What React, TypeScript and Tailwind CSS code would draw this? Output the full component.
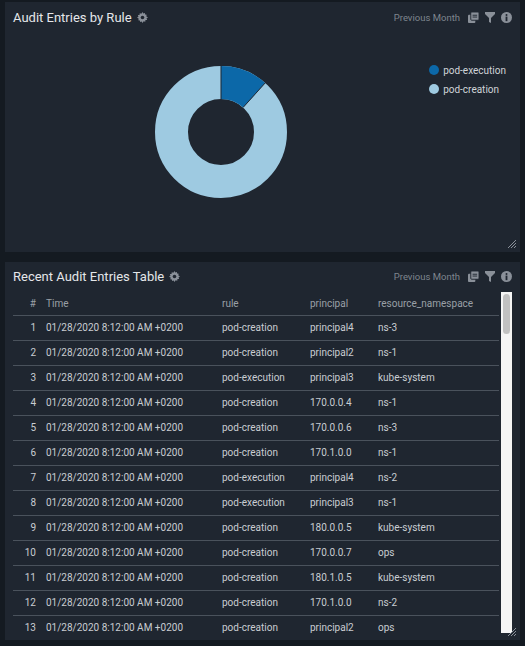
import React from "react";

const rows = [
  ["pod-creation","principal4","ns-3"],
  ["pod-creation","principal2","ns-1"],
  ["pod-execution","principal3","kube-system"],
  ["pod-creation","170.0.0.4","ns-1"],
  ["pod-creation","170.0.0.6","ns-3"],
  ["pod-creation","170.1.0.0","ns-1"],
  ["pod-execution","principal4","ns-2"],
  ["pod-execution","principal3","ns-1"],
  ["pod-creation","180.0.0.5","kube-system"],
  ["pod-creation","170.0.0.7","ops"],
  ["pod-creation","180.1.0.5","kube-system"],
  ["pod-creation","170.1.0.0","ns-2"],
  ["pod-creation","principal2","ops"],
];

function Gear() {
  return (
    <svg width="11" height="11" viewBox="0 0 16 16" fill="#8a9099">
      <path d="M8 0l1.2 2.1 2.3-.8.3 2.4 2.4.3-.8 2.3L16 8l-2.1 1.2.8 2.3-2.4.3-.3 2.4-2.3-.8L8 16l-1.2-2.1-2.3.8-.3-2.4-2.4-.3.8-2.3L0 8l2.1-1.2-.8-2.3 2.4-.3.3-2.4 2.3.8z" />
      <circle cx="8" cy="8" r="2.6" fill="#1f2630" />
    </svg>
  );
}

function Tools() {
  return (
    <div className="flex items-center gap-[6px] text-[#7e858e]">
      <span className="text-[9.5px] mr-[2px]">Previous Month</span>
      <svg width="11" height="11" viewBox="0 0 12 12" fill="#8a9099">
        <rect x="0" y="3" width="8" height="9" rx="1" />
        <rect x="3" y="0" width="9" height="9" rx="1" stroke="#1f2630" strokeWidth="1" />
        <rect x="5" y="3" width="5" height="1" fill="#1f2630" />
        <rect x="5" y="5" width="5" height="1" fill="#1f2630" />
      </svg>
      <svg width="10" height="11" viewBox="0 0 10 11" fill="#8a9099">
        <path d="M0 0h10v2L6 6v5L4 10V6L0 2z" />
      </svg>
      <svg width="11" height="11" viewBox="0 0 12 12">
        <circle cx="6" cy="6" r="6" fill="#8a9099" />
        <rect x="5" y="5" width="2" height="5" fill="#1f2630" />
        <circle cx="6" cy="3.2" r="1.1" fill="#1f2630" />
      </svg>
    </div>
  );
}

function Resize() {
  return (
    <svg width="9" height="9" viewBox="0 0 9 9" className="absolute right-[3px] bottom-[3px]" stroke="#8a9099" strokeWidth="1">
      <path d="M8 0L0 8M8 3L3 8M8 6L6 8" />
    </svg>
  );
}

export default function App() {
  const a = (42 * Math.PI) / 180;
  const R = 66, r = 33, cx = 67, cy = 67;
  const x1 = cx + R * Math.sin(a), y1 = cy - R * Math.cos(a);
  const x2 = cx + r * Math.sin(a), y2 = cy - r * Math.cos(a);
  return (
    <div className="w-[525px] h-[646px] bg-[#141a21] px-[5px] pt-[2px] flex flex-col gap-[10px]" style={{ fontFamily: "Roboto, 'Liberation Sans', sans-serif" }}>
      <div className="relative h-[250px] bg-[#1f2630] px-[8px] pt-[6px] shrink-0">
        <div className="flex items-center justify-between">
          <div className="flex items-center gap-[5px] text-[#e5e7ea] text-[13px]">Audit Entries by Rule <Gear /></div>
          <Tools />
        </div>
        <div className="flex">
          <svg width="134" height="134" viewBox="0 0 134 134" className="ml-[141px] mt-[37px]">
            <circle cx={cx} cy={cy} r={(R + r) / 2} fill="none" stroke="#9ecae1" strokeWidth={R - r} />
            <path d={`M${cx} ${cy - R} A${R} ${R} 0 0 1 ${x1} ${y1} L${x2} ${y2} A${r} ${r} 0 0 0 ${cx} ${cy - r}Z`} fill="#0c68a8" />
            <line x1={cx} y1={cy - R} x2={cx} y2={cy - r} stroke="#1f2630" strokeWidth="1" />
            <line x1={x1} y1={y1} x2={x2} y2={y2} stroke="#1f2630" strokeWidth="1" />
          </svg>
          <div className="ml-auto mt-[35px] mr-[6px] flex flex-col gap-[4px] text-[10px] text-[#d0d4d8]">
            <div className="flex items-center gap-[4px]"><span className="w-[10px] h-[10px] rounded-full bg-[#0c68a8]" />pod-execution</div>
            <div className="flex items-center gap-[4px]"><span className="w-[10px] h-[10px] rounded-full bg-[#9ecae1]" />pod-creation</div>
          </div>
        </div>
        <Resize />
      </div>
      <div className="relative h-[378px] bg-[#1f2630] px-[8px] pt-[5px] shrink-0 overflow-hidden">
        <div className="flex items-center justify-between">
          <div className="flex items-center gap-[5px] text-[#e5e7ea] text-[13px]">Recent Audit Entries Table <Gear /></div>
          <Tools />
        </div>
        <div className="flex mt-[5px]">
          <div className="w-[487px] text-[10px] text-[#c9cdd2]">
            <div className="flex h-[24px] items-center border-b border-[#4a525c] text-[#9aa0a7]">
              <div className="w-[25px] text-right pr-[2px]">#</div>
              <div className="w-[184px] pl-[8px]">Time</div>
              <div className="w-[88px]">rule</div>
              <div className="w-[68px]">principal</div>
              <div>resource_namespace</div>
            </div>
            {rows.map((row, i) => (
              <div key={i} className="flex h-[25px] items-center border-b border-[#4a525c]">
                <div className="w-[25px] text-right pr-[2px]">{i + 1}</div>
                <div className="w-[184px] pl-[8px]">01/28/2020 8:12:00 AM +0200</div>
                <div className="w-[88px]">{row[0]}</div>
                <div className="w-[68px]">{row[1]}</div>
                <div>{row[2]}</div>
              </div>
            ))}
          </div>
          <div className="ml-[2px] w-[11px] h-[341px] bg-[#f5f5f5] p-[1px] pt-[2px]">
            <div className="h-[40px] rounded-full bg-[#c1c1c1] mx-[1px]" />
          </div>
        </div>
        <Resize />
      </div>
    </div>
  );
}
